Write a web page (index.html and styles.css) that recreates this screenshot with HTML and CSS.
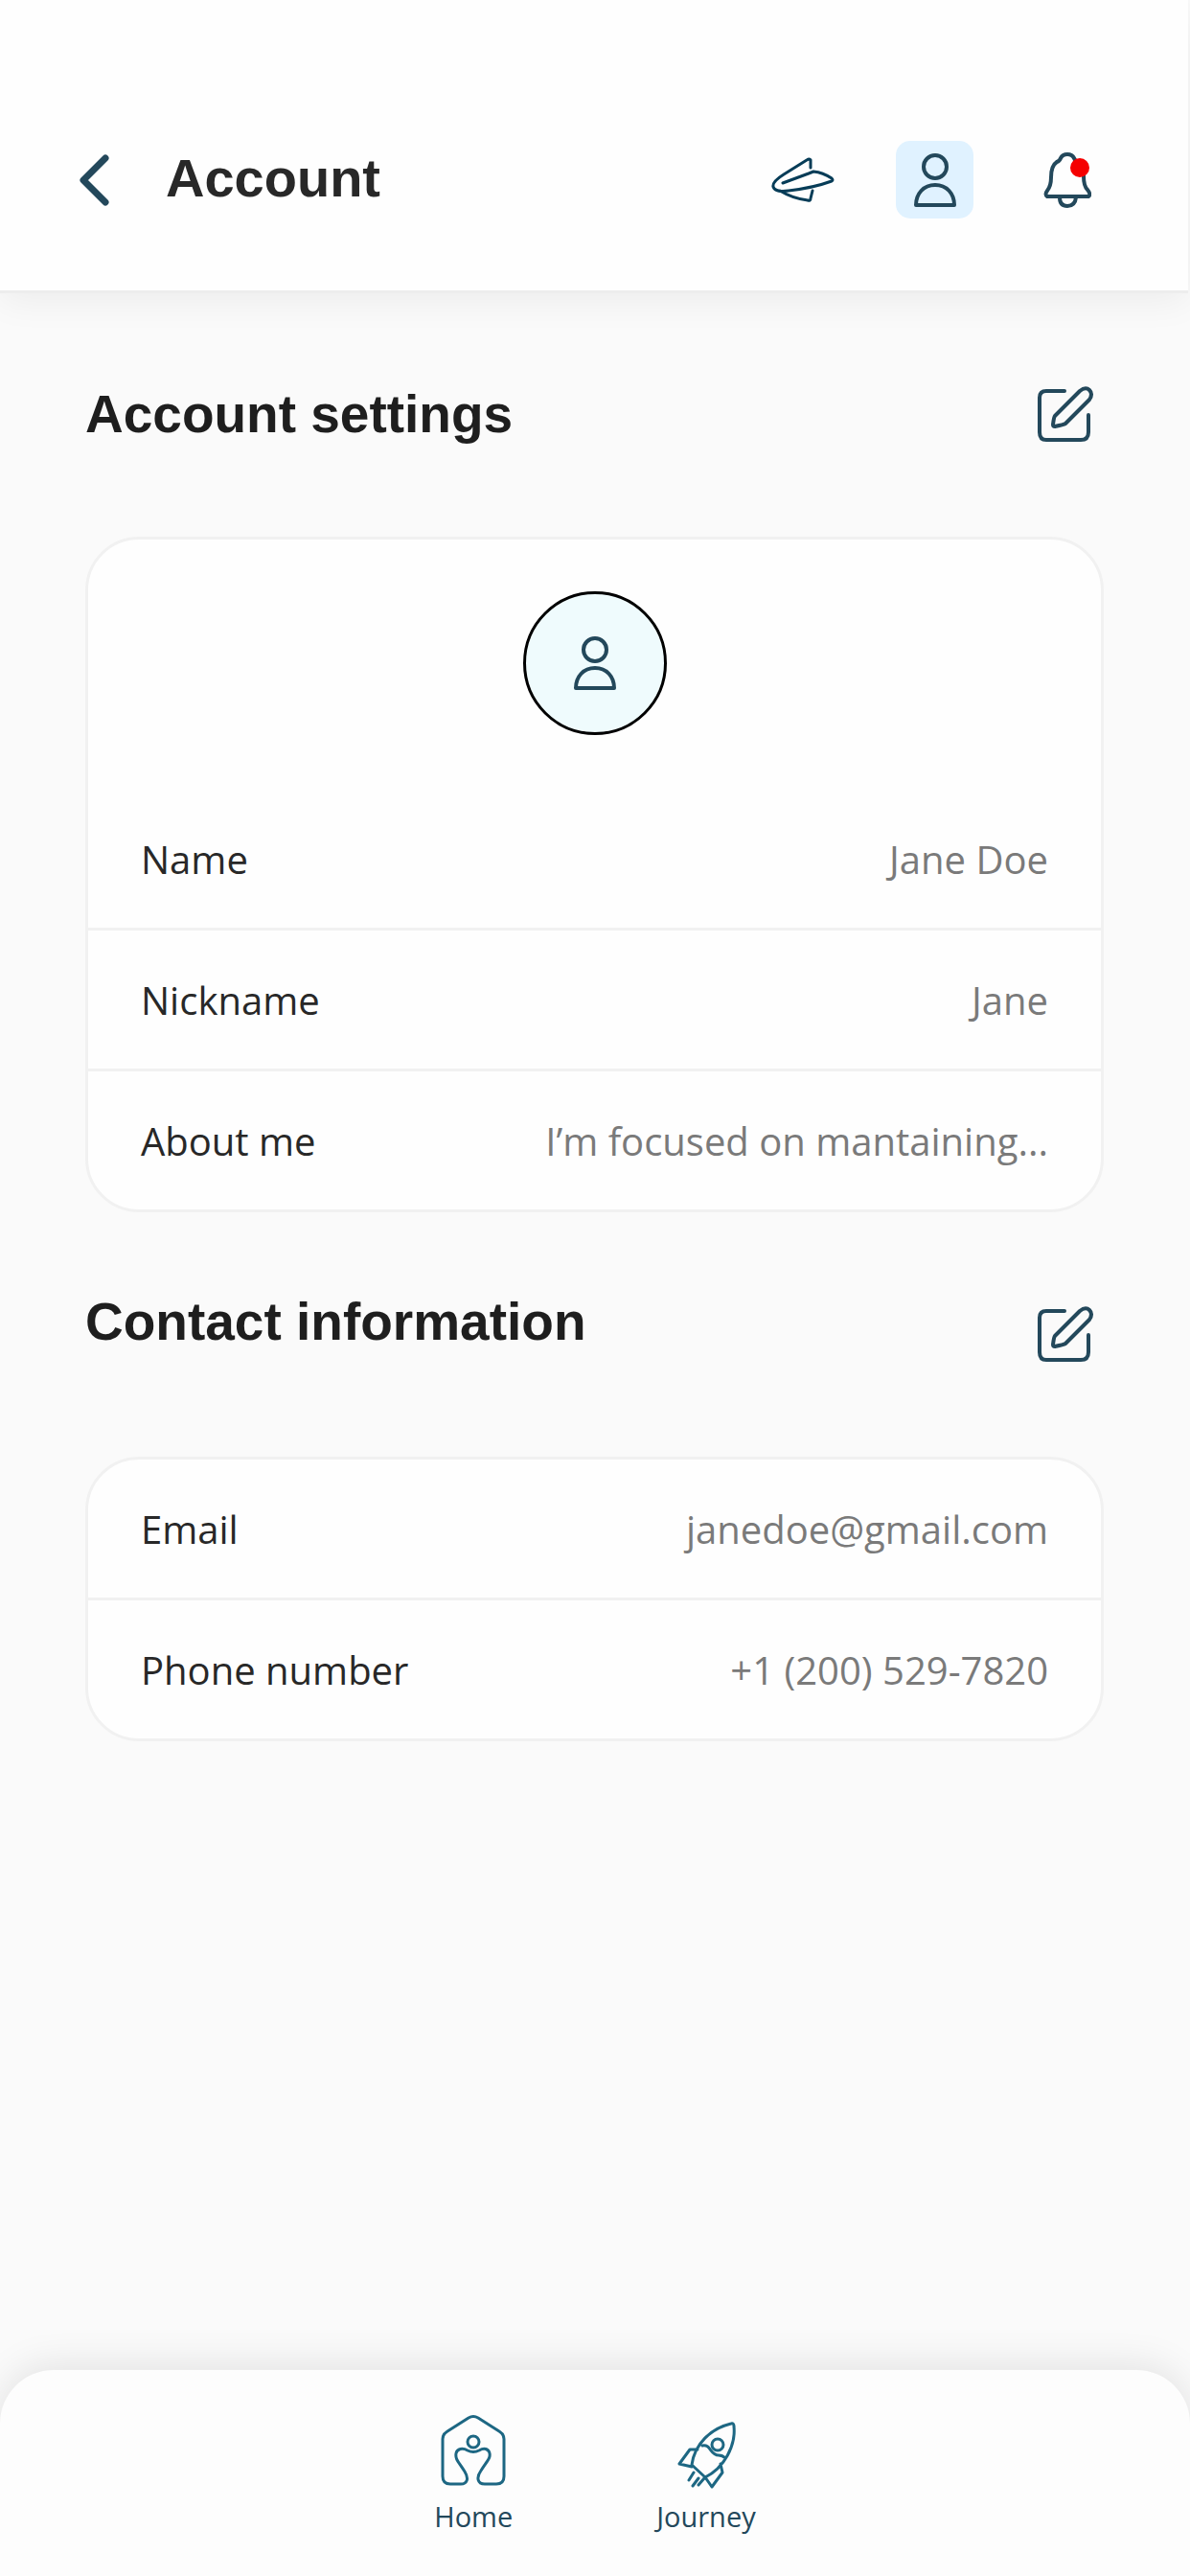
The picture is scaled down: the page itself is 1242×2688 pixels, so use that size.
FILE: index.html
```html
<!DOCTYPE html>
<html lang="en">
<head>
  <meta charset="utf-8">
  <meta name="viewport" content="width=device-width, initial-scale=1">
  <title>Account</title>
  <link rel="stylesheet" href="styles.css">
</head>
<body>
  <svg class="sprite" aria-hidden="true">
    <symbol id="icon-person" viewBox="0 0 46 58">
      <circle cx="23" cy="15" r="12"/>
      <path d="M3 55C3 43 11 34 23 34S43 43 43 55Z"/>
    </symbol>
    <symbol id="icon-edit" viewBox="0 0 60 60">
      <path d="M29 6H10Q3 6 3 13V49Q3 57 10 57H46Q54 57 54 49V31"/>
      <path d="M19 32L45 6Q51 1 55 5T55 15L30 40Q29 41 19 43Q17 43 17 41Q18 33 19 32Z"/>
    </symbol>
  </svg>

  <header class="topbar">
    <button class="icon-button back" type="button" aria-label="Back">
      <svg class="icon-chevron" viewBox="0 0 32 54"><path d="M28 4L5 27L28 50"/></svg>
    </button>
    <h1 class="title">Account</h1>
    <nav class="actions" aria-label="Shortcuts">
      <a class="action" href="#messages" aria-label="Messages">
        <svg class="icon-plane" viewBox="0 0 66 50">
          <path d="M41 12V4Q40 2 37 4L13 19C5 24 1 28 2 32C4 37 10 37 18 36Q44 33 63 26Q65 25 63 23Q54 17 44 16L39 18L12 28M9 36Q22 44 38 46Q41 47 41 44L43 36"/>
        </svg>
      </a>
      <a class="action is-active" href="#account" aria-label="Account" aria-current="page">
        <svg class="icon-person"><use href="#icon-person"/></svg>
      </a>
      <a class="action" href="#notifications" aria-label="Notifications">
        <svg class="icon-bell" viewBox="0 0 50 58">
          <path d="M18 6Q20 2 25 2T32 6Q33 9 36 10Q42 15 42 25Q42 35 46 39Q50 44 47 46H4Q1 44 4 40Q8 35 8 26Q8 14 14 10Q17 9 18 6ZM17 47Q17 56 25 56T34 47"/>
          <circle class="dot" cx="38" cy="16" r="10"/>
        </svg>
      </a>
    </nav>
  </header>

  <main class="content">
    <section class="section">
      <div class="section-head">
        <h2 class="section-title">Account settings</h2>
        <button class="icon-button" type="button" aria-label="Edit account settings">
          <svg class="icon-edit"><use href="#icon-edit"/></svg>
        </button>
      </div>
      <div class="card">
        <div class="avatar">
          <svg class="icon-person"><use href="#icon-person"/></svg>
        </div>
        <dl class="rows">
          <div class="row"><dt>Name</dt><dd>Jane Doe</dd></div>
          <div class="row"><dt>Nickname</dt><dd>Jane</dd></div>
          <div class="row"><dt>About me</dt><dd>I’m focused on mantaining...</dd></div>
        </dl>
      </div>
    </section>

    <section class="section">
      <div class="section-head is-raised">
        <h2 class="section-title">Contact information</h2>
        <button class="icon-button" type="button" aria-label="Edit contact information">
          <svg class="icon-edit"><use href="#icon-edit"/></svg>
        </button>
      </div>
      <div class="card">
        <dl class="rows">
          <div class="row"><dt>Email</dt><dd>janedoe@gmail.com</dd></div>
          <div class="row"><dt>Phone number</dt><dd>+1 (200) 529-7820</dd></div>
        </dl>
      </div>
    </section>
  </main>

  <nav class="tabbar" aria-label="Main">
    <a class="tab" href="#home">
      <svg class="icon-tab" viewBox="0 0 76 80">
        <path d="M33 6Q38 3 43 6L65 20Q70 23 70 28V67Q70 75 62 75H50C42 75 41 68 46 61C53 50 56 48 55 43C54 38 49 37 44 40Q38 43 32 40C27 37 21 38 20 43C19 49 22 51 29 62C34 70 31 75 25 75H14Q6 75 6 67V28Q6 23 11 20Z"/>
        <circle cx="38" cy="31" r="6"/>
      </svg>
      <span>Home</span>
    </a>
    <a class="tab" href="#journey">
      <svg class="icon-tab" viewBox="0 0 76 80">
        <path d="M23 55C26 33 43 17 64 12Q67 11 67 15C69 35 57 58 37 68ZM34 35C43 33 42 45 51 45Q55 45 58 48M29 39H21L10 54L23 57M53 54L55 63L44 78L37 68M25 63L20 71M30 69L24 77M36 69L30 76"/>
        <circle cx="50" cy="34" r="6"/>
      </svg>
      <span>Journey</span>
    </a>
  </nav>
</body>
</html>
```
FILE: styles.css
```css
* { box-sizing: border-box; }

body {
  margin: 0;
  min-height: 100vh;
  display: flex;
  flex-direction: column;
  background: #fafafa;
  color: #282828;
  font-family: "Open Sans", "Noto Sans", sans-serif;
  font-size: 40px;
  line-height: 56px;
}

svg {
  display: block;
  fill: none;
  stroke: #23485b;
  stroke-width: 4;
  stroke-linecap: round;
  stroke-linejoin: round;
}

.sprite { display: none; }

h1, h2, dl, dd { margin: 0; }

.icon-button {
  padding: 0;
  border: 0;
  background: none;
  cursor: pointer;
}

/* Top bar */
.topbar {
  display: flex;
  align-items: center;
  margin-right: 2px;
  padding: 147px 86px 75px 82px;
  background: #fefefe;
  border-bottom: 3px solid #ededed;
  box-shadow: 0 8px 36px rgba(0, 0, 0, 0.06);
}

.title {
  margin-left: 59px;
  padding-bottom: 4px;
  font: bold 56px/60px "Liberation Sans", Arial, sans-serif;
}

.actions {
  display: flex;
  gap: 57px;
  margin-left: auto;
}

.action {
  display: grid;
  place-items: center;
  width: 81px;
  height: 81px;
  border-radius: 15px;
}

.action.is-active { background: #e0f2ff; }

.icon-chevron { width: 32px; height: 54px; stroke-width: 7; }
.icon-plane { width: 66px; height: 50px; stroke: #063c57; stroke-width: 3; }
.icon-person { width: 46px; height: 58px; }
.icon-bell { width: 50px; height: 58px; }
.icon-edit { width: 60px; height: 60px; }
.dot { fill: #f50000; stroke: none; }

/* Sections */
.content {
  flex: 1;
  padding: 96px 90px 96px 89px;
}

.section + .section { margin-top: 97px; }

.section-head {
  display: flex;
  align-items: center;
  justify-content: space-between;
  padding-right: 10px;
  margin-bottom: 98px;
}

.section-head.is-raised { align-items: flex-start; }
.is-raised .section-title { line-height: 34px; }

.section-title {
  color: #1e1e1e;
  font: bold 55px/60px "Liberation Sans", Arial, sans-serif;
}

.card {
  overflow: hidden;
  background: #fefefe;
  border: 3px solid #f1f1f1;
  border-radius: 56px;
}

.avatar {
  display: grid;
  place-items: center;
  width: 150px;
  height: 150px;
  margin: 54px auto 57px;
  background: #effbfd;
  border: 3px solid #000;
  border-radius: 50%;
}

.row {
  display: flex;
  justify-content: space-between;
  gap: 32px;
  padding: 45px 55px 43px;
}

.row + .row { border-top: 3px solid #f1f1f1; }

.row dd { color: #7a7a7a; }

/* Bottom tabs */
.tabbar {
  display: flex;
  justify-content: center;
  gap: 150px;
  padding: 44px 0 42px;
  background: #fdfdfd;
  border-radius: 56px 56px 0 0;
  box-shadow: 0 -4px 40px rgba(0, 0, 0, 0.1);
}

.tab {
  display: flex;
  flex-direction: column;
  align-items: center;
  gap: 9px;
  color: #23485b;
  font-size: 29px;
  line-height: 40px;
  text-decoration: none;
}

.icon-tab {
  width: 76px;
  height: 80px;
  stroke: #1d6783;
  stroke-width: 3;
}
```
